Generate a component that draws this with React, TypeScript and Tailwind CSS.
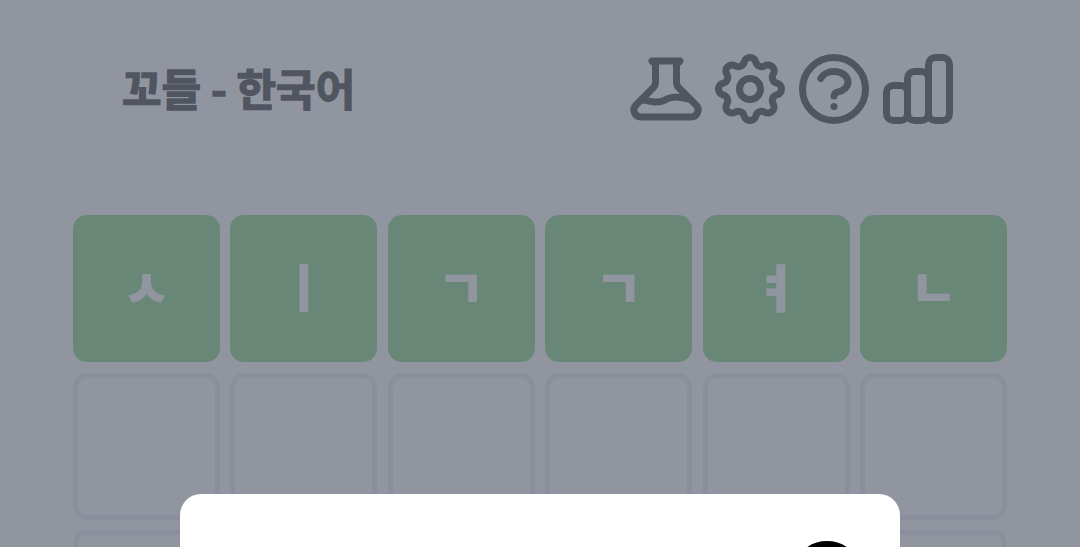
const firstRow = ['ㅅ', 'ㅣ', 'ㄱ', 'ㄱ', 'ㅕ', 'ㄴ'];
const emptyCells = Array.from({ length: 12 });

const icons = [
  [
    'M19.428 15.428a2 2 0 00-1.022-.547l-2.387-.477a6 6 0 00-3.86.517l-.318.158a6 6 0 01-3.86.517L6.05 15.21a2 2 0 00-1.806.547M8 4h8l-1 1v5.172a2 2 0 00.586 1.414l5 5c1.26 1.26.367 3.414-1.415 3.414H4.828c-1.782 0-2.674-2.154-1.414-3.414l5-5A2 2 0 009 10.172V5L8 4z',
  ],
  [
    'M10.325 4.317c.426-1.756 2.924-1.756 3.35 0a1.724 1.724 0 002.573 1.066c1.543-.94 3.31.826 2.37 2.37a1.724 1.724 0 001.065 2.572c1.756.426 1.756 2.924 0 3.35a1.724 1.724 0 00-1.066 2.573c.94 1.543-.826 3.31-2.37 2.37a1.724 1.724 0 00-2.572 1.065c-.426 1.756-2.924 1.756-3.35 0a1.724 1.724 0 00-2.573-1.066c-1.543.94-3.31-.826-2.37-2.37a1.724 1.724 0 00-1.065-2.572c-1.756-.426-1.756-2.924 0-3.35a1.724 1.724 0 001.066-2.573c-.94-1.543.826-3.31 2.37-2.37.996.608 2.296.07 2.572-1.065z',
    'M15 12a3 3 0 11-6 0 3 3 0 016 0z',
  ],
  [
    'M8.228 9c.549-1.165 2.03-2 3.772-2 2.21 0 4 1.343 4 3 0 1.4-1.278 2.575-3.006 2.907-.542.104-.994.54-.994 1.093m0 3h.01M21 12a9 9 0 11-18 0 9 9 0 0118 0z',
  ],
  [
    'M9 19v-6a2 2 0 00-2-2H5a2 2 0 00-2 2v6a2 2 0 002 2h2a2 2 0 002-2zm0 0V9a2 2 0 012-2h2a2 2 0 012 2v10m-6 0a2 2 0 002 2h2a2 2 0 002-2m0 0V5a2 2 0 012-2h2a2 2 0 012 2v14a2 2 0 01-2 2h-2a2 2 0 01-2-2z',
  ],
];

const Icon = ({ paths, className }: { paths: string[]; className: string }) => (
  <svg viewBox="0 0 24 24" fill="none" stroke="currentColor" strokeWidth={2} strokeLinecap="round" strokeLinejoin="round" className={className}>
    {paths.map((d) => (
      <path key={d} d={d} />
    ))}
  </svg>
);

const App = () => {
  return (
    <div className="relative h-[547px] overflow-hidden bg-white font-['Noto_Sans_CJK_KR',sans-serif] text-black">
      {/* HEADER */}
      <header className="flex h-[215px] items-start justify-between pl-[122px] pr-[120px] pt-[47px]">
        <h1 className="text-[43px] font-bold leading-[80px] [-webkit-text-stroke:1.5px_black]">꼬들 - 한국어</h1>
        <div className="flex">
          {icons.map((paths, i) => (
            <Icon key={i} paths={paths} className="size-[84px]" />
          ))}
        </div>
      </header>

      {/* BOARD */}
      <div className="mx-[73px] grid grid-cols-6 gap-[10.5px]">
        {firstRow.map((letter, i) => (
          <div
            key={i}
            className="flex h-[147px] items-center justify-center rounded-[14px] bg-[#66c65c] pb-[6px] text-[50px] font-bold text-white [-webkit-text-stroke:2px_white]"
          >
            {letter}
          </div>
        ))}
        {emptyCells.map((_, i) => (
          <div key={i} className="h-[147px] rounded-[14px] border-[5px] border-[#e5e7eb]" />
        ))}
      </div>

      {/* OVERLAY */}
      <div className="absolute inset-0 bg-[#6b7280]/75" />

      {/* MODAL */}
      <div className="absolute left-[180px] top-[494px] h-[300px] w-[720px] rounded-[21px] bg-white">
        <Icon
          paths={['M10 14l2-2m0 0l2-2m-2 2l-2-2m2 2l2 2m7-2a9 9 0 11-18 0 9 9 0 0118 0z']}
          className="absolute left-[605px] top-[40px] size-[84px]"
        />
      </div>
    </div>
  );
};

export default App;
